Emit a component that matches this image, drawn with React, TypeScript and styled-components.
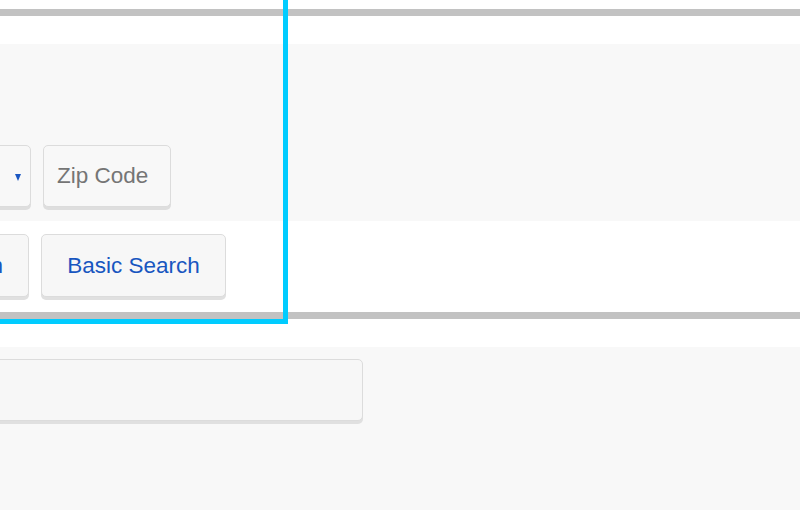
import React from 'react';
import styled, { createGlobalStyle } from 'styled-components';

const GlobalStyle = createGlobalStyle`
	html, body {
		margin: 0;
		padding: 0;
		background: #ffffff;
		font-family: "Liberation Sans", Arial, sans-serif;
	}
	#root {
		width: 800px;
		height: 510px;
		overflow: hidden;
	}
`;

const Page = styled.div`
	position: relative;
	width: 800px;
	height: 510px;
	padding-top: 9px;
	box-sizing: border-box;
	overflow: hidden;
`;

const SearchSection = styled.section`
	border-top: 7px solid #c2c2c2;
	border-bottom: 7px solid #c2c2c2;
	padding-top: 28px;
`;

const FieldBand = styled.div`
	background: #f8f8f8;
	height: 177px;
	padding-top: 101px;
	box-sizing: border-box;
`;

const ActionBand = styled.div`
	background: #ffffff;
	height: 91px;
	padding-top: 13px;
	box-sizing: border-box;
`;

const Row = styled.div<{ $offset: number }>`
	display: flex;
	gap: 12px;
	margin-left: ${p => p.$offset}px;
`;

const Control = styled.div<{ $width: number }>`
	display: flex;
	align-items: center;
	box-sizing: border-box;
	width: ${p => p.$width}px;
	height: 62px;
	padding: 0 13px;
	background: #f8f8f8;
	border: 1px solid #dcdcdc;
	border-radius: 5px;
	box-shadow: 0 3px 0 #dedede;
	font-size: 22.5px;
	color: #757575;
`;

const SelectBox = styled(Control)`
	justify-content: flex-end;
	padding-right: 9px;
`;

const Caret = styled.span`
	width: 0;
	height: 0;
	border-left: 3.5px solid transparent;
	border-right: 3.5px solid transparent;
	border-top: 7px solid #1b57c2;
	margin-top: 2px;
`;

const Button = styled.button<{ $width: number }>`
	box-sizing: border-box;
	width: ${p => p.$width}px;
	height: 63px;
	padding: 0;
	background: #f7f7f7;
	border: 1px solid #dcdcdc;
	border-radius: 5px;
	box-shadow: 0 3px 0 #e0e0e0;
	font-family: "Liberation Sans", Arial, sans-serif;
	font-size: 22.5px;
	color: #1856c0;
	cursor: pointer;
`;

const Gap = styled.div`
	height: 28px;
`;

const ResultsBand = styled.div`
	background: #f8f8f8;
	height: 200px;
	padding-top: 12px;
	box-sizing: border-box;
`;

const WideInput = styled.div`
	box-sizing: border-box;
	width: 400px;
	height: 62px;
	margin-left: -37px;
	background: #f7f7f7;
	border: 1px solid #dcdcdc;
	border-radius: 5px;
	box-shadow: 0 3px 0 #e0e0e0;
`;

const FocusRing = styled.div`
	position: absolute;
	left: -20px;
	top: -20px;
	width: 308px;
	height: 344px;
	box-sizing: border-box;
	border: 5px solid #00ccff;
	pointer-events: none;
	z-index: 2;
`;

export default function App() {
	return (
		<>
			<GlobalStyle />
			<Page>
				<SearchSection>
					<FieldBand>
						<Row $offset={-169}>
							<SelectBox $width={200}>
								<Caret />
							</SelectBox>
							<Control $width={128}>Zip Code</Control>
						</Row>
					</FieldBand>
					<ActionBand>
						<Row $offset={-94}>
							<Button $width={123}>Search</Button>
							<Button $width={185}>Basic Search</Button>
						</Row>
					</ActionBand>
				</SearchSection>
				<Gap />
				<ResultsBand>
					<WideInput />
				</ResultsBand>
				<FocusRing />
			</Page>
		</>
	);
}
